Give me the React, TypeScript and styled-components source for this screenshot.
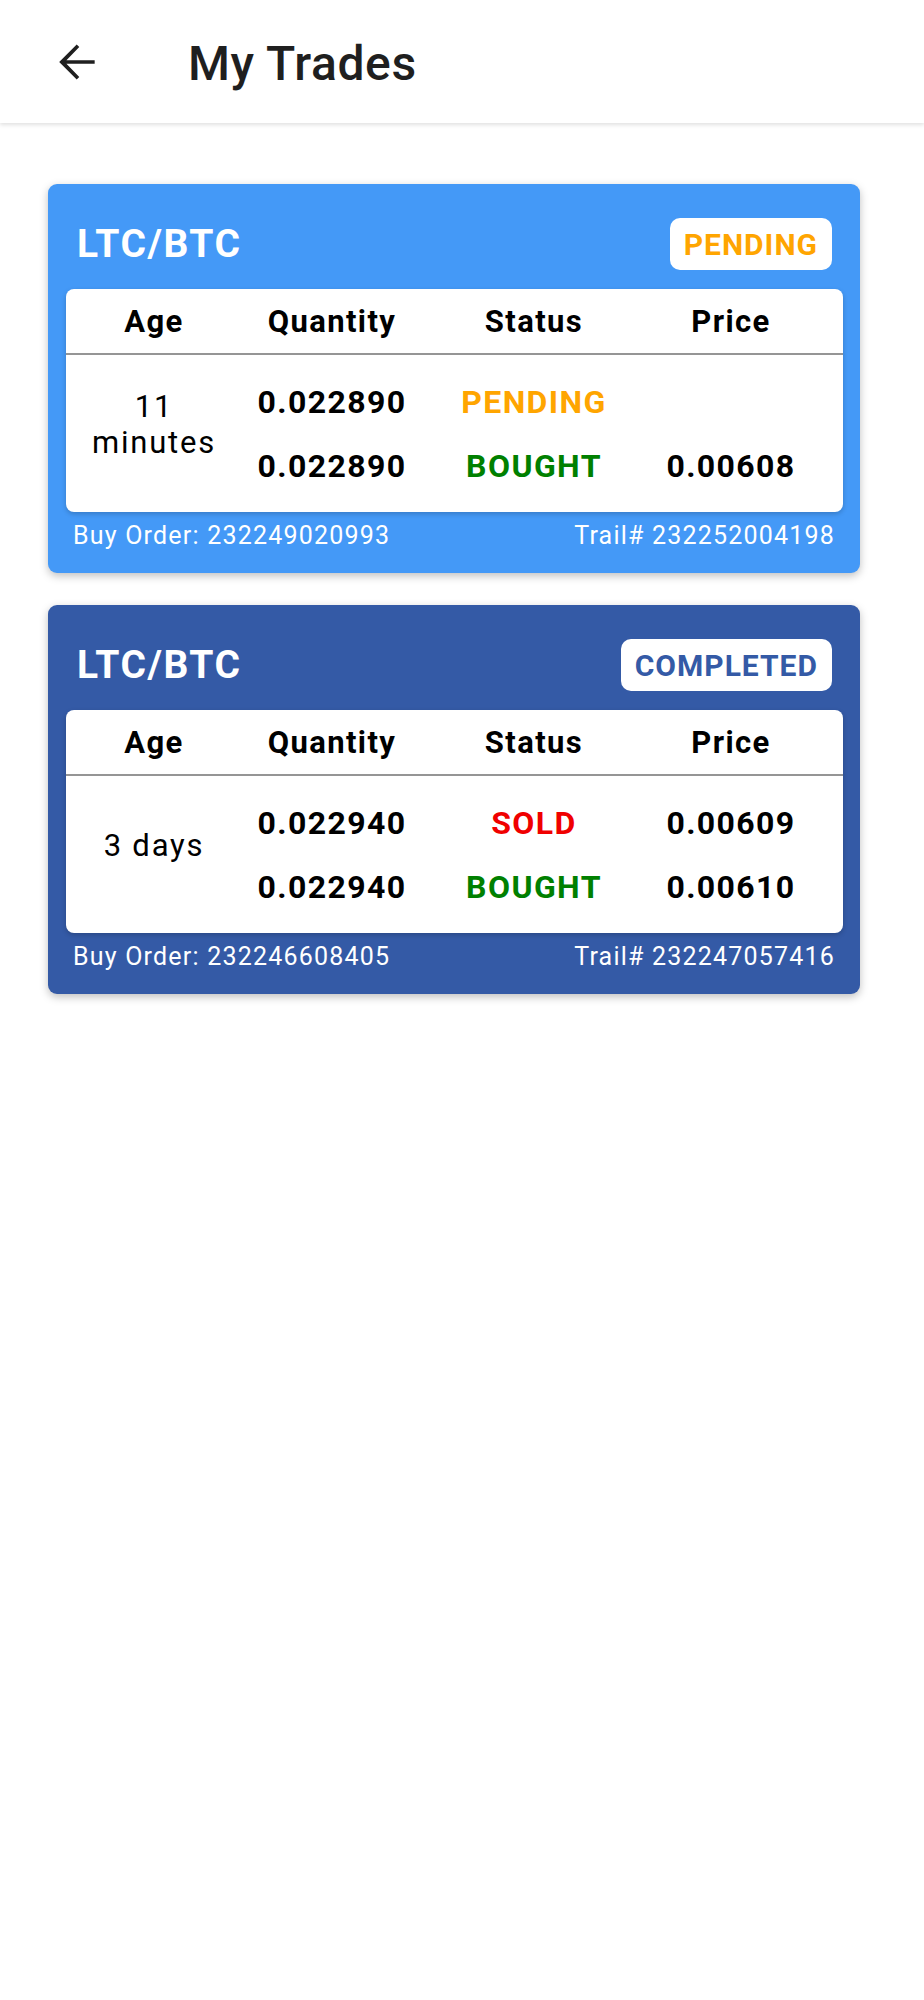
import styled, { createGlobalStyle } from "styled-components";

type Leg = { qty: string; status: "PENDING" | "BOUGHT" | "SOLD"; price: string };

type Trade = {
  pair: string;
  state: "PENDING" | "COMPLETED";
  age: string;
  legs: Leg[];
  buyOrder: string;
  trail: string;
};

const trades: Trade[] = [
  {
    pair: "LTC/BTC",
    state: "PENDING",
    age: "11 minutes",
    legs: [
      { qty: "0.022890", status: "PENDING", price: "" },
      { qty: "0.022890", status: "BOUGHT", price: "0.00608" },
    ],
    buyOrder: "232249020993",
    trail: "232252004198",
  },
  {
    pair: "LTC/BTC",
    state: "COMPLETED",
    age: "3 days",
    legs: [
      { qty: "0.022940", status: "SOLD", price: "0.00609" },
      { qty: "0.022940", status: "BOUGHT", price: "0.00610" },
    ],
    buyOrder: "232246608405",
    trail: "232247057416",
  },
];

const cardColors = {
  PENDING: "#4499f7",
  COMPLETED: "#345aa6",
};

const badgeColors = {
  PENDING: "#ffa500",
  COMPLETED: "#345aa6",
};

const statusColors = {
  PENDING: "#ffa500",
  BOUGHT: "#008000",
  SOLD: "#f00000",
};

const App = () => {
  return (
    <>
      <GlobalStyle />
      <Page>
        <Header>
          <BackButton aria-label="Back">
            <svg width="56" height="56" viewBox="0 0 24 24">
              <path
                fill="#1f1f1f"
                d="M20 11.2H7.9l5.5-5.6L12.3 4.5 4.8 12l7.5 7.5 1.1-1.1-5.5-5.6H20v-1.6z"
              />
            </svg>
          </BackButton>
          <Title>My Trades</Title>
        </Header>

        <List>
          {trades.map((trade, i) => (
            <Card key={i} $bg={cardColors[trade.state]}>
              <CardHeader>
                <Pair>{trade.pair}</Pair>
                <Badge $color={badgeColors[trade.state]}>{trade.state}</Badge>
              </CardHeader>

              <Table>
                <HeadRow>
                  <HeadCell>Age</HeadCell>
                  <HeadCell>Quantity</HeadCell>
                  <HeadCell>Status</HeadCell>
                  <HeadCell>Price</HeadCell>
                </HeadRow>
                <Body>
                  <AgeCell>{trade.age}</AgeCell>
                  {trade.legs.map((leg, j) => (
                    <LegRow key={j}>
                      <ValueCell>{leg.qty}</ValueCell>
                      <ValueCell $color={statusColors[leg.status]}>{leg.status}</ValueCell>
                      <ValueCell>{leg.price}</ValueCell>
                    </LegRow>
                  ))}
                </Body>
              </Table>

              <Footer>
                <span>Buy Order: {trade.buyOrder}</span>
                <span>Trail# {trade.trail}</span>
              </Footer>
            </Card>
          ))}
        </List>
      </Page>
    </>
  );
};

export default App;

const GlobalStyle = createGlobalStyle`
  body {
    margin: 0;
    background: #ffffff;
    font-family: Roboto, "Liberation Sans", sans-serif;
  }
`;

const Page = styled.div`
  width: 924px;
  min-height: 2000px;
  background: #ffffff;
`;

const Header = styled.header`
  height: 123px;
  display: flex;
  align-items: center;
  padding-left: 48px;
  background: #ffffff;
  box-shadow: 0 2px 4px rgba(0, 0, 0, 0.12);
  position: relative;
`;

const BackButton = styled.button`
  width: 56px;
  height: 56px;
  padding: 0;
  border: none;
  background: none;
  display: flex;
`;

const Title = styled.h1`
  margin: 0 0 0 84px;
  padding-top: 4px;
  font-size: 48px;
  line-height: 1;
  font-weight: 500;
  letter-spacing: 0.6px;
  color: #1f1f1f;
`;

const List = styled.div`
  display: flex;
  flex-direction: column;
  gap: 32px;
  padding: 61px 0 0 48px;
`;

const Card = styled.section<{ $bg: string }>`
  width: 812px;
  box-sizing: border-box;
  padding: 0 17px 0 18px;
  border-radius: 9px;
  background: ${({ $bg }) => $bg};
  box-shadow: 0 3px 9px rgba(0, 0, 0, 0.25);
`;

const CardHeader = styled.div`
  display: flex;
  align-items: center;
  justify-content: space-between;
  padding: 34px 11px 19px 11px;
`;

const Pair = styled.h2`
  margin: 0;
  font-size: 39px;
  line-height: 1;
  font-weight: 700;
  letter-spacing: 1.5px;
  color: #ffffff;
`;

const Badge = styled.span<{ $color: string }>`
  height: 52px;
  display: flex;
  align-items: center;
  padding: 0 14px;
  border-radius: 10px;
  background: #ffffff;
  color: ${({ $color }) => $color};
  font-size: 30px;
  font-weight: 700;
  letter-spacing: 1px;
`;

const Table = styled.div`
  background: #ffffff;
  border-radius: 8px;
  box-shadow: 0 2px 5px rgba(0, 0, 0, 0.2);
  color: #000000;
`;

const columns = "176px 180px 224px 170px";

const HeadRow = styled.div`
  display: grid;
  grid-template-columns: ${columns};
  height: 64px;
  align-items: center;
  border-bottom: 2px solid #959595;
`;

const HeadCell = styled.div`
  text-align: center;
  font-size: 31px;
  font-weight: 700;
  letter-spacing: 1.4px;
`;

const Body = styled.div`
  display: grid;
  grid-template-columns: ${columns};
  grid-template-rows: 64px 64px;
  padding: 15px 0 14px;
`;

const AgeCell = styled.div`
  grid-column: 1;
  grid-row: 1 / span 2;
  align-self: center;
  padding: 0 14px 18px;
  text-align: center;
  font-size: 31px;
  line-height: 36px;
  letter-spacing: 1.8px;
`;

const LegRow = styled.div`
  display: contents;
`;

const ValueCell = styled.div<{ $color?: string }>`
  align-self: center;
  text-align: center;
  font-size: 32px;
  font-weight: 700;
  letter-spacing: 1.4px;
  color: ${({ $color }) => $color || "#000000"};
`;

const Footer = styled.div`
  display: flex;
  justify-content: space-between;
  padding: 8px 8px 21px 7px;
  font-size: 25px;
  line-height: 32px;
  letter-spacing: 1.2px;
  color: #ffffff;
`;
